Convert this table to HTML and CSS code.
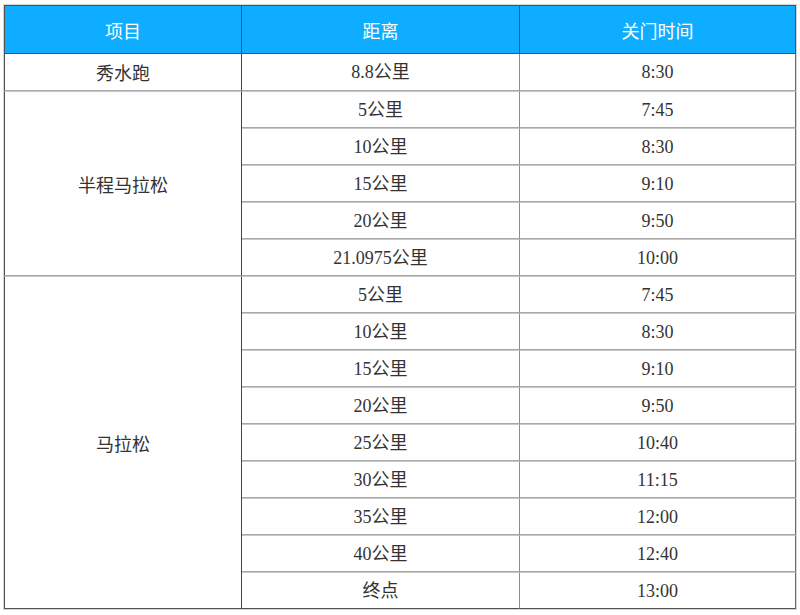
FILE: index.html
```html
<!DOCTYPE html>
<html lang="zh-CN">
<head>
<meta charset="utf-8">
<title>关门时间</title>
<link rel="stylesheet" href="styles.css">
</head>
<body>
<table class="schedule">
  <colgroup>
    <col class="c1"><col class="c2"><col class="c3">
  </colgroup>
  <thead>
    <tr><th class="first">项目</th><th>距离</th><th class="last">关门时间</th></tr>
  </thead>
  <tbody>
    <tr><td class="event">秀水跑</td><td class="mid">8.8公里</td><td>8:30</td></tr>
    <tr><td class="event" rowspan="5">半程马拉松</td><td class="mid">5公里</td><td>7:45</td></tr>
    <tr><td class="mid">10公里</td><td>8:30</td></tr>
    <tr><td class="mid">15公里</td><td>9:10</td></tr>
    <tr><td class="mid">20公里</td><td>9:50</td></tr>
    <tr><td class="mid">21.0975公里</td><td>10:00</td></tr>
    <tr><td class="event" rowspan="9">马拉松</td><td class="mid">5公里</td><td>7:45</td></tr>
    <tr><td class="mid">10公里</td><td>8:30</td></tr>
    <tr><td class="mid">15公里</td><td>9:10</td></tr>
    <tr><td class="mid">20公里</td><td>9:50</td></tr>
    <tr><td class="mid">25公里</td><td>10:40</td></tr>
    <tr><td class="mid">30公里</td><td>11:15</td></tr>
    <tr><td class="mid">35公里</td><td>12:00</td></tr>
    <tr><td class="mid">40公里</td><td>12:40</td></tr>
    <tr><td class="mid">终点</td><td>13:00</td></tr>
  </tbody>
</table>
</body>
</html>
```
FILE: styles.css
```css
html, body {
  margin: 0;
  padding: 0;
  background: #ffffff;
}
body {
  padding: 4px 3px 0 3px;
}
.schedule {
  border-collapse: separate;
  border-spacing: 0;
  table-layout: fixed;
  width: 794px;
  border: 1px solid #d6d6d6;
  font-family: "Liberation Serif", "Noto Sans CJK SC", serif;
  font-size: 18px;
  color: #333333;
}
.c1 { width: 238px; }
.c2 { width: 278px; }
.c3 { width: 276px; }
.schedule th {
  height: 49px;
  box-sizing: border-box;
  padding: 0;
  background: #0fadff;
  color: #ffffff;
  font-family: "Noto Sans CJK SC", "Liberation Sans", sans-serif;
  font-weight: normal;
  font-size: 18px;
  text-align: center;
  vertical-align: middle;
  border-top: 1px solid #505050;
  border-bottom: 1px solid #505050;
  border-right: 1px solid #505050;
}
.schedule th.first {
  border-left: 1px solid #505050;
}
.schedule td {
  height: 37px;
  box-sizing: border-box;
  padding: 0;
  text-align: center;
  vertical-align: middle;
  line-height: 20px;
  border-bottom: 1px solid #a8a8a8;
  border-top: 1px solid #c8c8c8;
  border-right: 1px solid #8c8c8c;
}
.schedule tbody tr:first-child td {
  border-top: none;
}
.schedule td.event {
  border-left: 1px solid #505050;
  border-right: 1px solid #444444;
  font-family: "Noto Sans CJK SC", "Liberation Sans", sans-serif;
  font-size: 18px;
  border-bottom: 1px solid #a8a8a8;
}
.schedule td.mid {
  border-right: 1px solid #8c8c8c;
}
.schedule tbody tr:last-child td,
.schedule td.event[rowspan="9"] {
  border-bottom: 1px solid #505050;
}
.schedule tr td:last-child {
  border-right: 1px solid #6a6a6a;
}
.schedule tr td.event:last-child {
  border-right: 1px solid #444444;
}
```
